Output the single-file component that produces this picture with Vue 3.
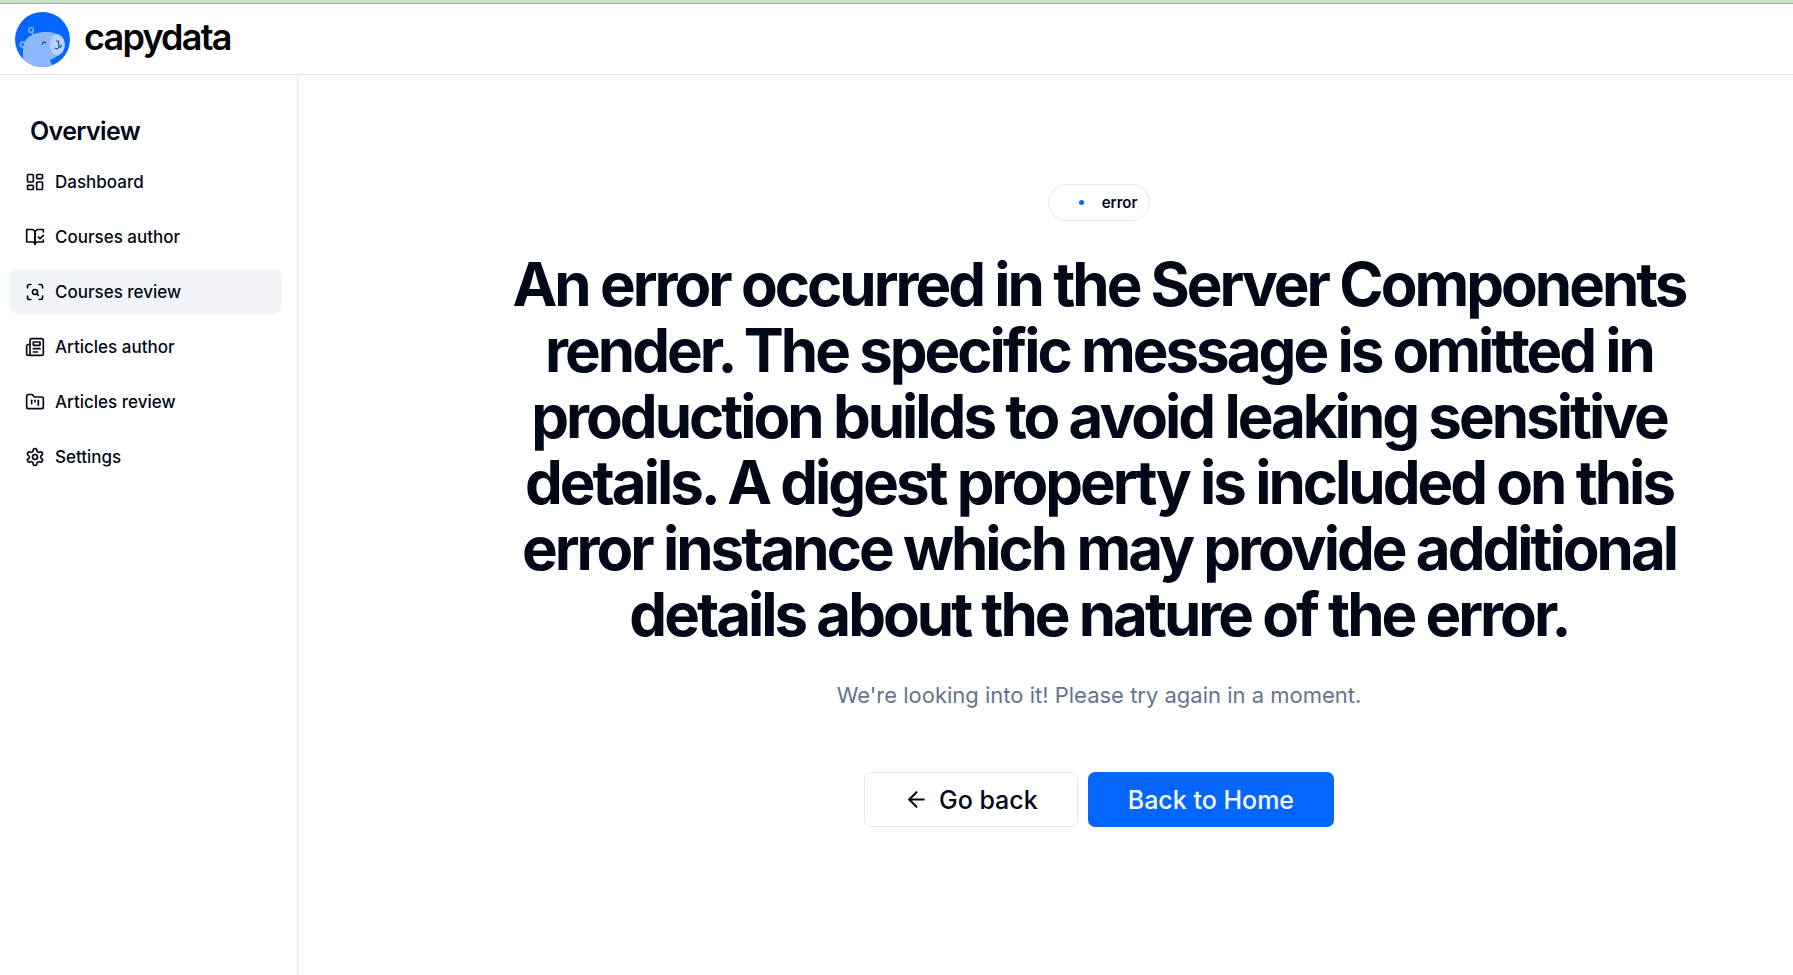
<script setup>
const items = [
  { label: 'Dashboard', icon: 'dashboard' },
  { label: 'Courses author', icon: 'book' },
  { label: 'Courses review', icon: 'scan', active: true },
  { label: 'Articles author', icon: 'news' },
  { label: 'Articles review', icon: 'folder' },
  { label: 'Settings', icon: 'settings' },
]

const paths = {
  dashboard: [
    'M4 3h5a1 1 0 0 1 1 1v7a1 1 0 0 1-1 1H4a1 1 0 0 1-1-1V4a1 1 0 0 1 1-1z',
    'M15 3h5a1 1 0 0 1 1 1v3a1 1 0 0 1-1 1h-5a1 1 0 0 1-1-1V4a1 1 0 0 1 1-1z',
    'M15 12h5a1 1 0 0 1 1 1v7a1 1 0 0 1-1 1h-5a1 1 0 0 1-1-1v-7a1 1 0 0 1 1-1z',
    'M4 16h5a1 1 0 0 1 1 1v3a1 1 0 0 1-1 1H4a1 1 0 0 1-1-1v-3a1 1 0 0 1 1-1z',
  ],
  book: [
    'M8 3H2v15h7c1.7 0 3 1.3 3 3V7c0-2.2-1.8-4-4-4Z',
    'm16 12 2 2 4-4',
    'M22 6V3h-6c-2.2 0-4 1.8-4 4v14c0-1.7 1.3-3 3-3h7v-2.3',
  ],
  scan: [
    'M3 7V5a2 2 0 0 1 2-2h2',
    'M17 3h2a2 2 0 0 1 2 2v2',
    'M21 17v2a2 2 0 0 1-2 2h-2',
    'M7 21H5a2 2 0 0 1-2-2v-2',
    'M15 12a3 3 0 1 1-6 0a3 3 0 0 1 6 0',
    'm16 16-1.9-1.9',
  ],
  news: [
    'M4 22h16a2 2 0 0 0 2-2V4a2 2 0 0 0-2-2H8a2 2 0 0 0-2 2v16a2 2 0 0 1-2 2Zm0 0a2 2 0 0 1-2-2v-9c0-1.1.9-2 2-2h2',
    'M18 14h-8',
    'M15 18h-5',
    'M10 6h8v4h-8V6Z',
  ],
  folder: [
    'M4 20h16a2 2 0 0 0 2-2V8a2 2 0 0 0-2-2h-7.93a2 2 0 0 1-1.66-.9l-.82-1.2A2 2 0 0 0 7.93 3H4a2 2 0 0 0-2 2v13c0 1.1.9 2 2 2Z',
    'M8 10v4',
    'M12 10v2',
    'M16 10v6',
  ],
  settings: [
    'M12.22 2h-.44a2 2 0 0 0-2 2v.18a2 2 0 0 1-1 1.73l-.43.25a2 2 0 0 1-2 0l-.15-.08a2 2 0 0 0-2.73.73l-.22.38a2 2 0 0 0 .73 2.73l.15.1a2 2 0 0 1 1 1.72v.51a2 2 0 0 1-1 1.74l-.15.09a2 2 0 0 0-.73 2.73l.22.38a2 2 0 0 0 2.73.73l.15-.08a2 2 0 0 1 2 0l.43.25a2 2 0 0 1 1 1.73V20a2 2 0 0 0 2 2h.44a2 2 0 0 0 2-2v-.18a2 2 0 0 1 1-1.73l.43-.25a2 2 0 0 1 2 0l.15.08a2 2 0 0 0 2.73-.73l.22-.39a2 2 0 0 0-.73-2.73l-.15-.08a2 2 0 0 1-1-1.74v-.5a2 2 0 0 1 1-1.74l.15-.09a2 2 0 0 0 .73-2.73l-.22-.38a2 2 0 0 0-2.73-.73l-.15.08a2 2 0 0 1-2 0l-.43-.25a2 2 0 0 1-1-1.73V4a2 2 0 0 0-2-2z',
    'M15 12a3 3 0 1 1-6 0a3 3 0 0 1 6 0',
  ],
}
</script>

<template>
  <div class="page">
    <div class="strip"></div>
    <header class="header">
      <a class="brand" href="#">
        <svg class="logo" viewBox="0 0 55 55" aria-hidden="true">
          <defs>
            <clipPath id="disc"><circle cx="27.5" cy="27.5" r="27.5" /></clipPath>
          </defs>
          <circle cx="27.5" cy="27.5" r="27.5" fill="#0566ff" />
          <g clip-path="url(#disc)">
            <g fill="none" stroke="#8db8fc">
              <circle cx="16" cy="18" r="2.4" stroke-width="1.4" />
              <path d="M17 20.2l1.5 4" stroke-width="1.4" />
              <circle cx="7.8" cy="32.6" r="2.4" stroke-width="1.7" />
            </g>
            <path
              d="M8 55V38C8 29 13 24 20 21.8C27 19.5 36 19.5 42 22C48 24 50.5 29 49.5 35C48.5 41 44 43 40 45.5C37.5 47 35 47.5 35 48.8C35 50 37 51 37.5 53.5L36 56Z"
              fill="#8db8fc"
            />
            <ellipse cx="42.2" cy="32.8" rx="7.5" ry="10.5" fill="#b6d2fd" />
            <g fill="none" stroke="#17509f" stroke-width="1.2" stroke-linecap="round">
              <path d="M27.3 32.2c.3-2 2-2.5 3.500-1.400" />
              <path d="M41.5 29l2 .2l.5 5M40.3 36.200c1.500 1 3.500.4 3.700-2c1 1.500 2.500 1 2.300-.8" />
            </g>
          </g>
        </svg>
        <span class="name">capydata</span>
      </a>
    </header>

    <div class="body">
      <aside class="sidebar">
        <h2 class="title">Overview</h2>
        <nav class="nav">
          <a
            v-for="item in items"
            :key="item.label"
            href="#"
            class="link"
            :class="{ active: item.active }"
          >
            <svg class="icon" viewBox="0 0 24 24" aria-hidden="true">
              <path v-for="d in paths[item.icon]" :key="d" :d="d" />
            </svg>
            <span>{{ item.label }}</span>
          </a>
        </nav>
      </aside>

      <main class="main">
        <div class="badge"><span class="dot"></span><span>error</span></div>
        <h1 class="message">
          An error occurred in the Server Components render. The specific message is omitted in
          production builds to avoid leaking sensitive details. A digest property is included on
          this error instance which may provide additional details about the nature of the error.
        </h1>
        <p class="hint">We're looking into it! Please try again in a moment.</p>
        <div class="actions">
          <button type="button" class="btn outline">
            <svg class="arrow" viewBox="0 0 24 24" aria-hidden="true">
              <path d="m12 19-7-7 7-7" />
              <path d="M19 12H5" />
            </svg>
            <span>Go back</span>
          </button>
          <a href="#" class="btn primary">Back to Home</a>
        </div>
      </main>
    </div>
  </div>
</template>

<style>
body {
  margin: 0;
  background: #fff;
}
</style>

<style scoped>
.page {
  min-height: 100vh;
  display: flex;
  flex-direction: column;
  box-sizing: border-box;
  font-family: Inter, 'Liberation Sans', sans-serif;
  color: #020817;
}
.page * {
  box-sizing: border-box;
}
.strip {
  height: 4px;
  background: #c5e2c6;
  border-bottom: 1px solid #9ab59c;
}
.header {
  height: 71px;
  display: flex;
  align-items: center;
  padding: 0 15px;
  border-bottom: 1px solid #e2e8f0;
}
.brand {
  display: flex;
  align-items: center;
  gap: 14px;
  color: #000;
  text-decoration: none;
}
.logo {
  width: 55px;
  height: 55px;
}
.name {
  font-size: 36px;
  line-height: 40px;
  font-weight: 600;
  letter-spacing: -0.05em;
  padding-bottom: 5px;
}
.body {
  flex: 1;
  display: flex;
}
.sidebar {
  width: 298px;
  flex: none;
  padding: 39px 15px 16px 10px;
  border-right: 1px solid #e2e8f0;
}
.title {
  margin: 0 0 11px;
  padding-left: 20px;
  font-size: 25px;
  line-height: 34px;
  font-weight: 600;
  letter-spacing: -0.025em;
}
.nav {
  display: flex;
  flex-direction: column;
  gap: 10px;
}
.link {
  display: flex;
  align-items: center;
  gap: 10px;
  height: 45px;
  padding: 0 15px;
  border-radius: 7px;
  font-size: 17px;
  line-height: 24px;
  font-weight: 500;
  color: inherit;
  text-decoration: none;
}
.active {
  background: #f1f5f9;
}
.icon,
.arrow {
  flex: none;
  fill: none;
  stroke: currentColor;
  stroke-width: 2;
  stroke-linecap: round;
  stroke-linejoin: round;
}
.icon {
  width: 20px;
  height: 20px;
}
.main {
  flex: 1;
  display: flex;
  flex-direction: column;
  align-items: center;
  padding: 109px 0 109px 107px;
}
.badge {
  display: flex;
  align-items: center;
  gap: 18px;
  height: 37px;
  padding: 0 12px 0 30px;
  border: 1px solid #e2e8f0;
  border-radius: 19px;
  font-size: 15px;
  line-height: 20px;
  font-weight: 600;
}
.dot {
  width: 5px;
  height: 5px;
  border-radius: 50%;
  background: #0566ff;
}
.message {
  max-width: 1200px;
  margin: 30px 0 0;
  font-size: 60px;
  line-height: 66px;
  font-weight: 700;
  letter-spacing: -0.05em;
  text-align: center;
}
.hint {
  margin: 31px 0 0;
  font-size: 22px;
  line-height: 34px;
  color: #64748b;
  text-align: center;
}
.actions {
  display: flex;
  gap: 10px;
  margin-top: 60px;
}
.btn {
  display: flex;
  align-items: center;
  justify-content: center;
  height: 55px;
  padding: 0 40px;
  border: 0;
  border-radius: 7px;
  font-family: inherit;
  font-size: 25px;
  line-height: 34px;
  font-weight: 500;
  color: inherit;
  text-decoration: none;
}
.outline {
  gap: 10px;
  padding: 0 39px;
  border: 1px solid #e2e8f0;
  background: #fff;
}
.arrow {
  width: 25px;
  height: 25px;
}
.primary {
  background: #0566ff;
  color: #f8fafc;
}
</style>
